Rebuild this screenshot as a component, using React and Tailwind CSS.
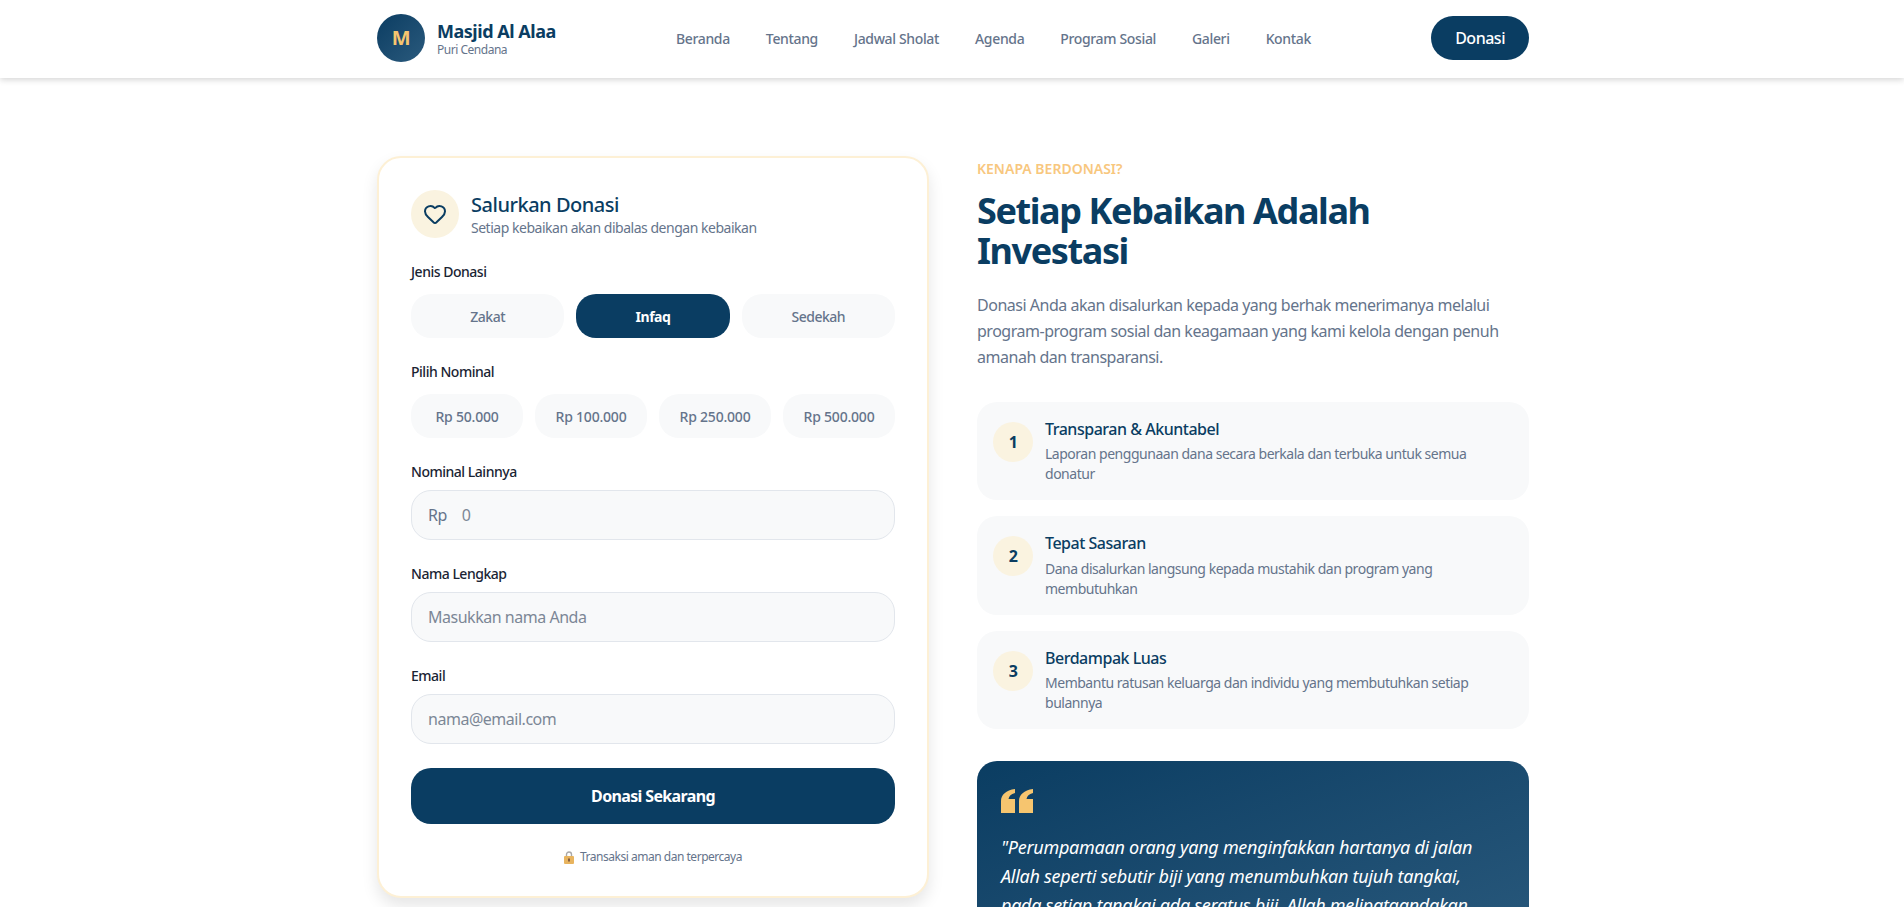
import { Heart } from "lucide-react";

const navLinks = ["Beranda", "Tentang", "Jadwal Sholat", "Agenda", "Program Sosial", "Galeri", "Kontak"];
const nominals = ["Rp 50.000", "Rp 100.000", "Rp 250.000", "Rp 500.000"];
const reasons = [
  {
    title: "Transparan & Akuntabel",
    text: "Laporan penggunaan dana secara berkala dan terbuka untuk semua donatur",
  },
  {
    title: "Tepat Sasaran",
    text: "Dana disalurkan langsung kepada mustahik dan program yang membutuhkan",
  },
  {
    title: "Berdampak Luas",
    text: "Membantu ratusan keluarga dan individu yang membutuhkan setiap bulannya",
  },
];

const LockIcon = () => (
  <svg width="10" height="13" viewBox="0 0 10 13">
    <path d="M2.5 6V3.5a2.5 2.5 0 0 1 5 0V6" fill="none" stroke="#a9a9a9" strokeWidth="1.4" />
    <rect x="0" y="5" width="10" height="8" rx="1" fill="#e8b45f" />
    <rect x="4.2" y="7.5" width="1.6" height="3" fill="#6b4a3a" />
  </svg>
);

const QuoteIcon = () => (
  <svg width="32" height="24" viewBox="0 0 32 24" className="fill-[#f6c56f]">
    <path d="M0 24V12C0 6 5 1 14 0V4C10 5 8 7 7.5 10H14V24Z" />
    <path d="M18 24V12C18 6 23 1 32 0V4C28 5 26 7 25.5 10H32V24Z" />
  </svg>
);

const Field = ({ label, placeholder, prefix }) => (
  <div className="mb-6">
    <label className="block text-[14px] font-medium text-[#1a2433] mb-2 leading-[20px]">{label}</label>
    <div className="h-[50px] bg-[#f8f9fa] border border-[#e2e6ec] rounded-[20px] flex items-center px-4 text-[16px] text-[#7c8796]">
      {prefix && <span className="text-[#65748b] mr-[15px]">{prefix}</span>}
      <span>{placeholder}</span>
    </div>
  </div>
);

export default function App() {
  return (
    <div className="h-screen overflow-hidden bg-white font-['Noto_Sans',sans-serif] tracking-[-0.03em]">
      <header className="h-[78px] pb-[2px] bg-white shadow-[0_2px_6px_rgba(0,0,0,0.16)] relative">
        <div className="max-w-[1154px] pl-[2px] mx-auto h-full flex items-center justify-between">
          <div className="flex items-center gap-3">
            <div className="w-12 h-12 rounded-full bg-gradient-to-br from-[#0a3d62] to-[#2a5a7d] flex items-center justify-center text-[20px] font-bold text-[#f6c56f]">
              M
            </div>
            <div>
              <div className="text-[18px] font-bold text-[#0a3d62] leading-[24px]">Masjid Al Alaa</div>
              <div className="text-[12px] text-[#65748b] leading-[14px]">Puri Cendana</div>
            </div>
          </div>
          <nav className="flex items-center gap-9 text-[14px] font-medium text-[#65748b] whitespace-nowrap tracking-[-0.025em]">
            {navLinks.map((link) => (
              <a key={link}>{link}</a>
            ))}
          </nav>
          <button className="h-11 px-6 rounded-full bg-[#0a3d62] text-white text-[16px] font-medium">Donasi</button>
        </div>
      </header>

      <main className="max-w-[1154px] pl-[2px] mx-auto grid grid-cols-2 gap-12 pt-[78px]">
        <div className="bg-white border-2 border-[#fdf0d5] rounded-[24px] shadow-[0_8px_16px_rgba(0,0,0,0.1)] px-8 pt-8 pb-[30px] self-start">
          <div className="flex items-center gap-3 mb-6">
            <div className="w-12 h-12 rounded-full bg-[#faf3e0] flex items-center justify-center">
              <Heart size={24} className="text-[#0a3d62]" />
            </div>
            <div>
              <div className="text-[20px] font-medium text-[#0a3d62] leading-[26px] mt-[2px]">Salurkan Donasi</div>
              <div className="text-[14px] text-[#65748b] leading-[20px]">Setiap kebaikan akan dibalas dengan kebaikan</div>
            </div>
          </div>

          <label className="block text-[14px] font-medium text-[#1a2433] mb-3 leading-[20px]">Jenis Donasi</label>
          <div className="grid grid-cols-3 gap-3 mb-6">
            <button className="h-11 rounded-[20px] bg-[#f8f9fa] text-[14px] font-medium text-[#65748b]">Zakat</button>
            <button className="h-11 rounded-[20px] bg-[#0a3d62] text-[14px] font-bold text-white">Infaq</button>
            <button className="h-11 rounded-[20px] bg-[#f8f9fa] text-[14px] font-medium text-[#65748b]">Sedekah</button>
          </div>

          <label className="block text-[14px] font-medium text-[#1a2433] mb-3 leading-[20px]">Pilih Nominal</label>
          <div className="grid grid-cols-4 gap-3 mb-6">
            {nominals.map((n) => (
              <button key={n} className="h-11 rounded-[20px] bg-[#f8f9fa] text-[14px] font-medium text-[#65748b] tracking-[-0.015em]">
                {n}
              </button>
            ))}
          </div>

          <Field label="Nominal Lainnya" prefix="Rp" placeholder="0" />
          <Field label="Nama Lengkap" placeholder="Masukkan nama Anda" />
          <Field label="Email" placeholder="nama@email.com" />

          <button className="w-full h-14 rounded-[20px] bg-[#0a3d62] text-white text-[16px] font-bold tracking-[-0.04em]">Donasi Sekarang</button>
          <div className="mt-6 flex items-center justify-center gap-[6px] text-[12px] leading-[18px] text-[#65748b]">
            <LockIcon />
            <span>Transaksi aman dan terpercaya</span>
          </div>
        </div>

        <div>
          <div className="text-[14px] font-semibold text-[#f8c77e] leading-[20px] uppercase tracking-normal mt-[3px]">Kenapa Berdonasi?</div>
          <h2 className="text-[36px] font-bold text-[#0a3d62] leading-[40px] mt-3 mb-[21px] tracking-[-0.039em]">
            Setiap Kebaikan Adalah
            <br />
            Investasi
          </h2>
          <p className="text-[16px] text-[#65748b] leading-[26px] mb-8">
            Donasi Anda akan disalurkan kepada yang berhak menerimanya melalui program-program sosial dan keagamaan yang kami kelola dengan penuh amanah dan transparansi.
          </p>
          <div className="flex flex-col gap-4 mb-8">
            {reasons.map((r, i) => (
              <div key={r.title} className="bg-[#f8f9fa] rounded-[20px] p-4 flex gap-3">
                <div className="w-10 h-10 mt-1 rounded-full bg-[#faf3e0] flex items-center justify-center font-bold text-[16px] text-[#0a3d62] shrink-0">
                  {i + 1}
                </div>
                <div>
                  <div className="text-[16px] font-medium text-[#0a3d62] leading-[22px]">{r.title}</div>
                  <div className="text-[14px] text-[#65748b] leading-[20px] mt-[4.25px]">{r.text}</div>
                </div>
              </div>
            ))}
          </div>
          <div className="rounded-[20px] bg-gradient-to-br from-[#0a3d62] to-[#2a5a7d] px-6 pt-7 pb-6 text-white">
            <QuoteIcon />
            <p className="italic text-[18px] leading-[29px] mt-5 tracking-[-0.015em]">
              "Perumpamaan orang yang menginfakkan hartanya di jalan Allah seperti sebutir biji yang menumbuhkan tujuh tangkai, pada setiap tangkai ada seratus biji. Allah melipatgandakan bagi siapa yang Dia kehendaki."
            </p>
          </div>
        </div>
      </main>
    </div>
  );
}
